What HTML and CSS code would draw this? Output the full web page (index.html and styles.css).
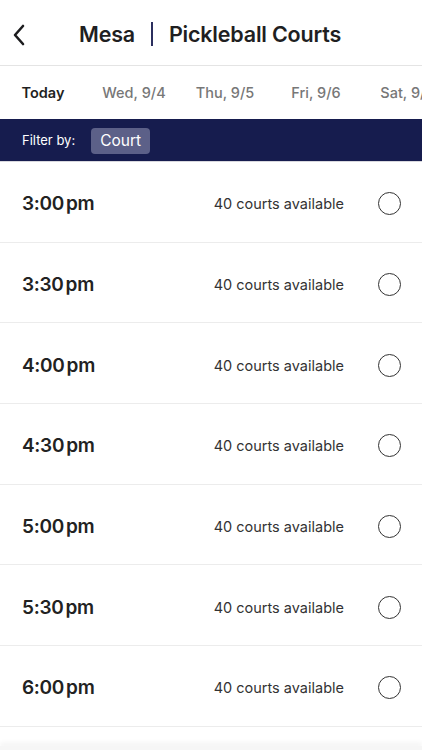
FILE: index.html
```html
<!DOCTYPE html>
<html lang="en">
  <head>
    <meta charset="UTF-8" />
    <meta name="viewport" content="width=device-width, initial-scale=1.0" />
    <title>Mesa | Pickleball Courts</title>
    <link rel="stylesheet" href="styles.css">
  </head>
  <body>
    <div class="app">
      <header class="top-bar">
        <button class="back" aria-label="Back">
          <svg width="14" height="22" viewBox="0 0 14 22">
            <path d="M11 2 L3 11 L11 20" fill="none" stroke="#1c1c1e" stroke-width="2.6" stroke-linecap="round" stroke-linejoin="round" />
          </svg>
        </button>
        <h1 class="title">
          <span>Mesa</span>
          <span class="sep"></span>
          <span>Pickleball Courts</span>
        </h1>
      </header>

      <!-- Day picker -->
      <nav class="days">
        <span class="day active">Today</span>
        <span class="day">Wed, 9/4</span>
        <span class="day">Thu, 9/5</span>
        <span class="day">Fri, 9/6</span>
        <span class="day">Sat, 9/7</span>
      </nav>

      <div class="filter-bar">
        <span class="filter-label">Filter by:</span>
        <span class="chip">Court</span>
      </div>

      <ul class="slots" id="slots"></ul>

      <div class="bottom-bar"></div>
    </div>

    <script>
      const times = ["3:00", "3:30", "4:00", "4:30", "5:00", "5:30", "6:00"];
      const list = document.getElementById("slots");

      times.forEach(function (t) {
        const li = document.createElement("li");
        li.className = "slot";
        li.innerHTML =
          '<span class="time">' + t + '<span class="ampm">pm</span></span>' +
          '<span class="avail">40 courts available</span>' +
          '<span class="radio"></span>';
        list.appendChild(li);
      });
    </script>
  </body>
</html>
```

FILE: styles.css
```css
* {
  box-sizing: border-box;
}

body {
  margin: 0;
  font-family: Inter, "Noto Sans", Arial, sans-serif;
  background-color: #fff;
  color: #1c1c1e;
}

.app {
  width: 422px;
  height: 750px;
  overflow: hidden;
  display: flex;
  flex-direction: column;
}

.top-bar {
  height: 66px;
  flex-shrink: 0;
  display: flex;
  align-items: center;
  position: relative;
  border-bottom: 1px solid #e4e4e4;
}

.back {
  position: absolute;
  left: 10px;
  top: 24px;
  padding: 0;
  border: none;
  background: none;
  width: 18px;
  height: 24px;
}

.title {
  margin: 2px 0 0 79px;
  font-size: 21.5px;
  font-weight: 600;
  letter-spacing: -0.2px;
  display: flex;
  align-items: center;
  gap: 16px;
  color: #1f1f22;
}

.sep {
  width: 2px;
  height: 24px;
  background-color: #2b2f5e;
}

.days {
  height: 53px;
  flex-shrink: 0;
  display: flex;
  align-items: center;
  margin-left: -2.5px;
  white-space: nowrap;
  font-size: 14.5px;
  font-weight: 500;
}

.day {
  flex: 0 0 91px;
  text-align: center;
  color: #777;
}

.day.active {
  color: #1f1f22;
  font-weight: 600;
}

.filter-bar {
  height: 43px;
  flex-shrink: 0;
  background-color: #161c4e;
  display: flex;
  align-items: center;
  padding-left: 22px;
  border-bottom: 1px solid #d8d8de;
}

.filter-label {
  color: #fff;
  font-size: 13px;
  margin-right: 16px;
}

.chip {
  background-color: #5c6088;
  color: #fff;
  font-size: 15.5px;
  padding: 3px 9px 4px;
  margin-top: 2px;
  border-radius: 4px;
}

.slots {
  list-style: none;
  margin: 0;
  padding: 0;
}

.slot {
  height: 80.7px;
  display: flex;
  align-items: center;
  padding: 4px 21px 0 22px;
  border-bottom: 1.5px solid #ececec;
}

.time {
  font-size: 19px;
  font-weight: 600;
  color: #222;
  flex: 1;
  letter-spacing: -0.3px;
}

.ampm {
  margin-left: 2px;
}

.avail {
  font-size: 14.5px;
  color: #333;
  margin-right: 34px;
}

.radio {
  width: 23px;
  height: 23px;
  border: 1.5px solid #333;
  border-radius: 50%;
}

.bottom-bar {
  margin-top: auto;
  height: 4px;
  flex-shrink: 0;
  background-color: #f6f6f6;
  box-shadow: 0 -3px 5px rgba(0, 0, 0, 0.06);
}
```
